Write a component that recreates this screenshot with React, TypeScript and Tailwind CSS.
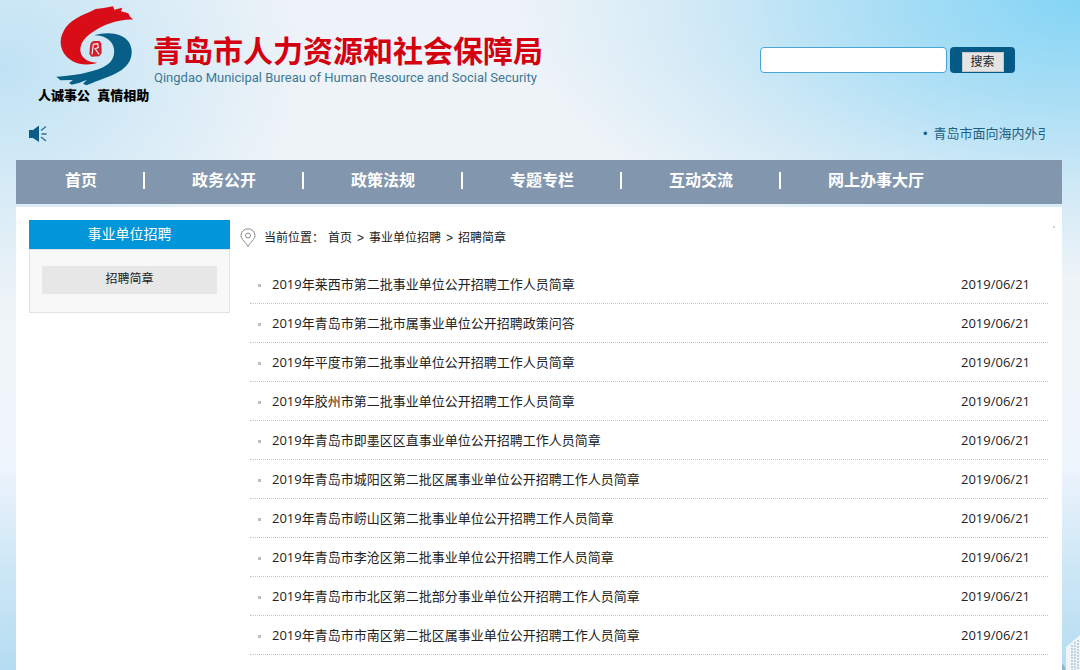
import React from 'react';

const navItems = ['首页', '政务公开', '政策法规', '专题专栏', '互动交流', '网上办事大厅'];

const notices = [
  '2019年莱西市第二批事业单位公开招聘工作人员简章',
  '2019年青岛市第二批市属事业单位公开招聘政策问答',
  '2019年平度市第二批事业单位公开招聘工作人员简章',
  '2019年胶州市第二批事业单位公开招聘工作人员简章',
  '2019年青岛市即墨区区直事业单位公开招聘工作人员简章',
  '2019年青岛市城阳区第二批区属事业单位公开招聘工作人员简章',
  '2019年青岛市崂山区第二批事业单位公开招聘工作人员简章',
  '2019年青岛市李沧区第二批事业单位公开招聘工作人员简章',
  '2019年青岛市市北区第二批部分事业单位公开招聘工作人员简章',
  '2019年青岛市市南区第二批区属事业单位公开招聘工作人员简章',
];

function Emblem() {
  return (
    <svg viewBox="100 10 246 246" className="ml-[37px] size-[82px]" aria-hidden="true">
      <path
        d="M205 36 L228 25 L252 22 L280 17 L284 27 L308 21 L304 32 L326 38 L330 47 L341 57 C300 55 255 70 216 96 C184 118 174 145 188 167 C198 180 214 186 233 186 C212 194 176 194 152 177 C122 156 114 120 134 87 C150 60 180 46 205 36 Z"
        fill="#d90d17"
      />
      <path
        d="M223 104 C262 92 310 96 328 125 C344 152 337 187 306 208 C280 225 244 236 218 247 L200 254 L190 249 L202 237 L180 246 L156 252 L148 247 L160 238 L122 239 L110 228 C160 226 216 216 250 200 C276 187 286 168 283 145 C279 118 254 104 223 104 Z"
        fill="#075f88"
      />
      <path d="M216 124 L222 121 H240 L245 129 L246 157 L239 167 L215 168 L209 160 L212 130 Z" fill="#d1202a" />
      <path
        d="M217 161 L221 131 L234 129 L236 141 L224 145 M227 145 L238 161"
        fill="none"
        stroke="#f3f5f8"
        strokeWidth="3.500"
      />
    </svg>
  );
}

function Speaker() {
  return (
    <svg viewBox="0 0 18 18" className="h-[18px] w-[18px]" aria-hidden="true">
      <path d="M0 5 H4 L10 0.500 V17 L4 13 H0 Z" fill="#0b5c86" />
      <path d="M12 5.500 L17 1.500 M12.500 9 H17.500 M12 12 L17 16" fill="none" stroke="#2d7195" strokeWidth="1.400" />
    </svg>
  );
}

function Pin() {
  return (
    <svg viewBox="0 0 16 20" className="mr-1 h-5 w-4 shrink-0" fill="none" stroke="#8a8a8a" aria-hidden="true">
      <path d="M8 18.500 C6 14.500 1 11.500 1 7.500 A7 6.700 0 0 1 15 7.500 C15 11.500 10 14.500 8 18.500 Z" />
      <circle cx="8" cy="7.500" r="2.500" />
    </svg>
  );
}

function Tower() {
  return (
    <svg viewBox="0 0 18 44" className="absolute right-0 bottom-0 h-11 w-[18px]" aria-hidden="true">
      <path d="M4 14 L18 2 V44 H4 Z" fill="#eef6fa" />
      <path d="M10 12 V44 M13 9 V44 M16 7 V44" stroke="#b3c4d2" strokeWidth="1.500" strokeDasharray="2 1" />
      <path d="M0 30 L3 34 L5 44 H0 Z" fill="#8fb4ca" />
    </svg>
  );
}

export default function App() {
  return (
    <div className="relative min-h-screen overflow-hidden bg-[radial-gradient(ellipse_560px_280px_at_100%_0%,#84d5f5_0%,#a9def5_35%,#d3eaf6_70%,transparent_100%),radial-gradient(ellipse_300px_240px_at_0%_10%,#bfe2f4_0%,transparent_100%),linear-gradient(to_bottom,#edf3f8_0px,#eff4f8_350px,#eff5fd_460px,#cde7f6_570px,#b5dcf2_670px)] px-4 font-['Liberation_Sans','Noto_Sans_CJK_SC',sans-serif] text-[13px] text-[#222]">
      <Tower />
      <div className="relative mr-0.5">
        <header className="flex h-[110px] items-start justify-between">
          <div className="flex">
            <div className="w-[137px] pt-1">
              <Emblem />
              <p className="pl-[22px] text-[13px] leading-5 font-black whitespace-pre text-black">人诚事公  真情相助</p>
            </div>
            <div className="pt-[34px]">
              <h1 className="text-[30px] leading-9 font-bold whitespace-nowrap text-[#d4000f]">青岛市人力资源和社会保障局</h1>
              <p className="pl-px font-['Roboto',sans-serif] text-[13px] leading-4 whitespace-nowrap text-[#3d7896]">
                Qingdao Municipal Bureau of Human Resource and Social Security
              </p>
            </div>
          </div>
          <form className="mt-[47px] mr-[47px] flex gap-[3px]" onSubmit={(e) => e.preventDefault()}>
            <input
              type="text"
              aria-label="搜索"
              className="h-[26px] w-[187px] rounded border border-[#4aa5d3] bg-white px-2 outline-none"
            />
            <div className="flex h-[26px] w-[65px] items-center justify-center rounded bg-[#045a87] pt-1">
              <button type="submit" className="h-5 w-[42px] border border-[#c8c8c8] bg-[#e4e4e4] text-xs leading-[18px] text-[#222]">
                搜索
              </button>
            </div>
          </form>
        </header>

        <div className="flex h-12 items-center justify-between pr-[17px] pl-[13px]">
          <Speaker />
          <a href="#notice" className="flex w-[122px] gap-1.5 overflow-hidden whitespace-nowrap text-[#1b5f82]">
            <span>•</span>
            <span>青岛市面向海内外引</span>
          </a>
        </div>

        <nav className="mt-0.5 flex h-11 bg-[#8296ae] pt-[9px] pl-0.5">
          {navItems.map((item, i) => (
            <React.Fragment key={item}>
              {i > 0 && <span className="mt-[3px] h-[17px] w-0.5 bg-white" />}
              <a href="#nav" className="pr-[46px] pl-[47px] text-base leading-6 font-bold whitespace-nowrap text-white">
                {item}
              </a>
            </React.Fragment>
          ))}
        </nav>

        <main className="relative mt-[3px] flex min-h-[470px] gap-2.5 bg-white pt-[13px] pr-3.5 pl-[13px]">
          <span className="absolute top-[19px] right-[7px] size-0.5 bg-[#d5d5d5]" />
          <aside className="w-[201px] shrink-0">
            <h2 className="h-[29px] bg-[#0096d9] text-center text-sm leading-[29px] text-white">事业单位招聘</h2>
            <div className="h-16 border border-[#e3e3e3] bg-[#f8f8f8] px-3 pt-4">
              <a href="#brochure" className="block h-7 bg-[#e7e7e7] text-center text-xs leading-[26px]">
                招聘简章
              </a>
            </div>
          </aside>
          <section className="min-w-0 flex-1">
            <div className="flex h-[45px] items-start gap-1 pt-2 text-xs leading-5">
              <Pin />
              <p>当前位置：</p>
              <p>
                <a href="#home">首页</a>
                <span className="mx-[5px]">&gt;</span>
                <a href="#jobs">事业单位招聘</a>
                <span className="mx-[5px]">&gt;</span>
                <a href="#brochure">招聘简章</a>
              </p>
            </div>
            <ul className="ml-2.5 font-['Open_Sans','Noto_Sans_CJK_SC',sans-serif]">
              {notices.map((title) => (
                <li key={title} className="flex h-[39px] items-center border-b border-dotted border-[#c4c4c4] pt-0.5 pr-[18px] pl-2">
                  <span className="mr-[11px] size-[3px] bg-[#bdbdbd]" />
                  <a href="#item" className="flex-1">{title}</a>
                  <time>2019/06/21</time>
                </li>
              ))}
            </ul>
          </section>
        </main>
      </div>
    </div>
  );
}
